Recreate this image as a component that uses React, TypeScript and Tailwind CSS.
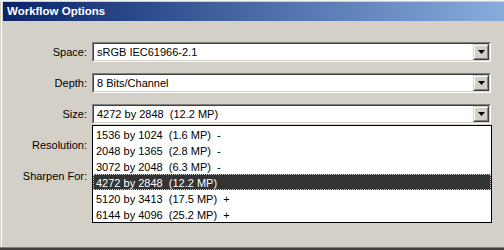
import React from "react";

function Arrow() {
  return (
    <div className="w-[16px] h-[16px] border border-t-[#d4d0c8] border-l-[#d4d0c8] border-r-[#404040] border-b-[#404040] bg-[#d4d0c8]">
      <div className="w-full h-full border border-t-white border-l-white border-r-[#808080] border-b-[#808080] flex items-center justify-center">
        <svg width="7" height="4" viewBox="0 0 7 4" className="block">
          <path d="M0 0H7L3.5 4Z" fill="#000" />
        </svg>
      </div>
    </div>
  );
}

function Combo({ value }: { value?: string }) {
  return (
    <div className="w-[399px] h-[20px] border border-t-[#808080] border-l-[#808080] border-r-white border-b-white">
      <div className="w-full h-full border border-t-[#404040] border-l-[#404040] border-r-[#d4d0c8] border-b-[#d4d0c8] bg-white flex items-center">
        <div className="flex-1 pl-[3px] whitespace-pre leading-[16px]">{value ?? ""}</div>
        <Arrow />
      </div>
    </div>
  );
}

const rows: { label: string; value?: string }[] = [
  { label: "Space:", value: "sRGB IEC61966-2.1" },
  { label: "Depth:", value: "8 Bits/Channel" },
  { label: "Size:", value: "4272 by 2848  (12.2 MP)" },
  { label: "Resolution:" },
  { label: "Sharpen For:" },
];

const items = [
  "1536 by 1024  (1.6 MP)  -",
  "2048 by 1365  (2.8 MP)  -",
  "3072 by 2048  (6.3 MP)  -",
  "4272 by 2848  (12.2 MP)",
  "5120 by 3413  (17.5 MP)  +",
  "6144 by 4096  (25.2 MP)  +",
];

export default function App() {
  return (
    <div className="relative w-[504px] h-[250px] overflow-hidden bg-[#d4d0c8] font-['Liberation_Sans',Arial,sans-serif] text-[11px] text-black flex flex-col">
      <div className="h-[1px] bg-[#f4f2ee]" />
      <div className="flex-1 flex flex-col border-l border-white ml-[1px]">
        <div className="pt-[1px]">
          <div className="h-[19px] ml-[1px] flex items-center pl-[4px] bg-gradient-to-r from-[#0a246a] via-[#4a6aa6] to-[#88acdc] text-white font-bold text-[11.5px]">
            Workflow Options
          </div>
        </div>
        <div className="pt-[21px] flex flex-col gap-[11px]">
          {rows.map((r) => (
            <div key={r.label} className="flex items-center h-[20px]">
              <div className="w-[85px] text-right whitespace-nowrap">{r.label}</div>
              <div className="ml-[5px]">
                {r.value !== undefined ? <Combo value={r.value} /> : <Combo />}
              </div>
            </div>
          ))}
        </div>
      </div>
      <div className="h-[3px] border-t border-[#808080] bg-[#404040]" />

      <div className="absolute left-[92px] top-[125px] w-[400px] h-[98px] border border-black bg-white flex flex-col">
        {items.map((t, i) =>
          i === 3 ? (
            <div
              key={t}
              className="h-[16px] bg-[#333333] text-white border border-dotted border-[#d0d0d0] pl-[2px] leading-[16px] whitespace-pre flex items-center"
            >
              <span className="pt-[1px]">{t}</span>
            </div>
          ) : (
            <div key={t} className="h-[16px] pl-[3px] whitespace-pre flex items-center">
              <span className="pt-[2px]">{t}</span>
            </div>
          )
        )}
      </div>
    </div>
  );
}
